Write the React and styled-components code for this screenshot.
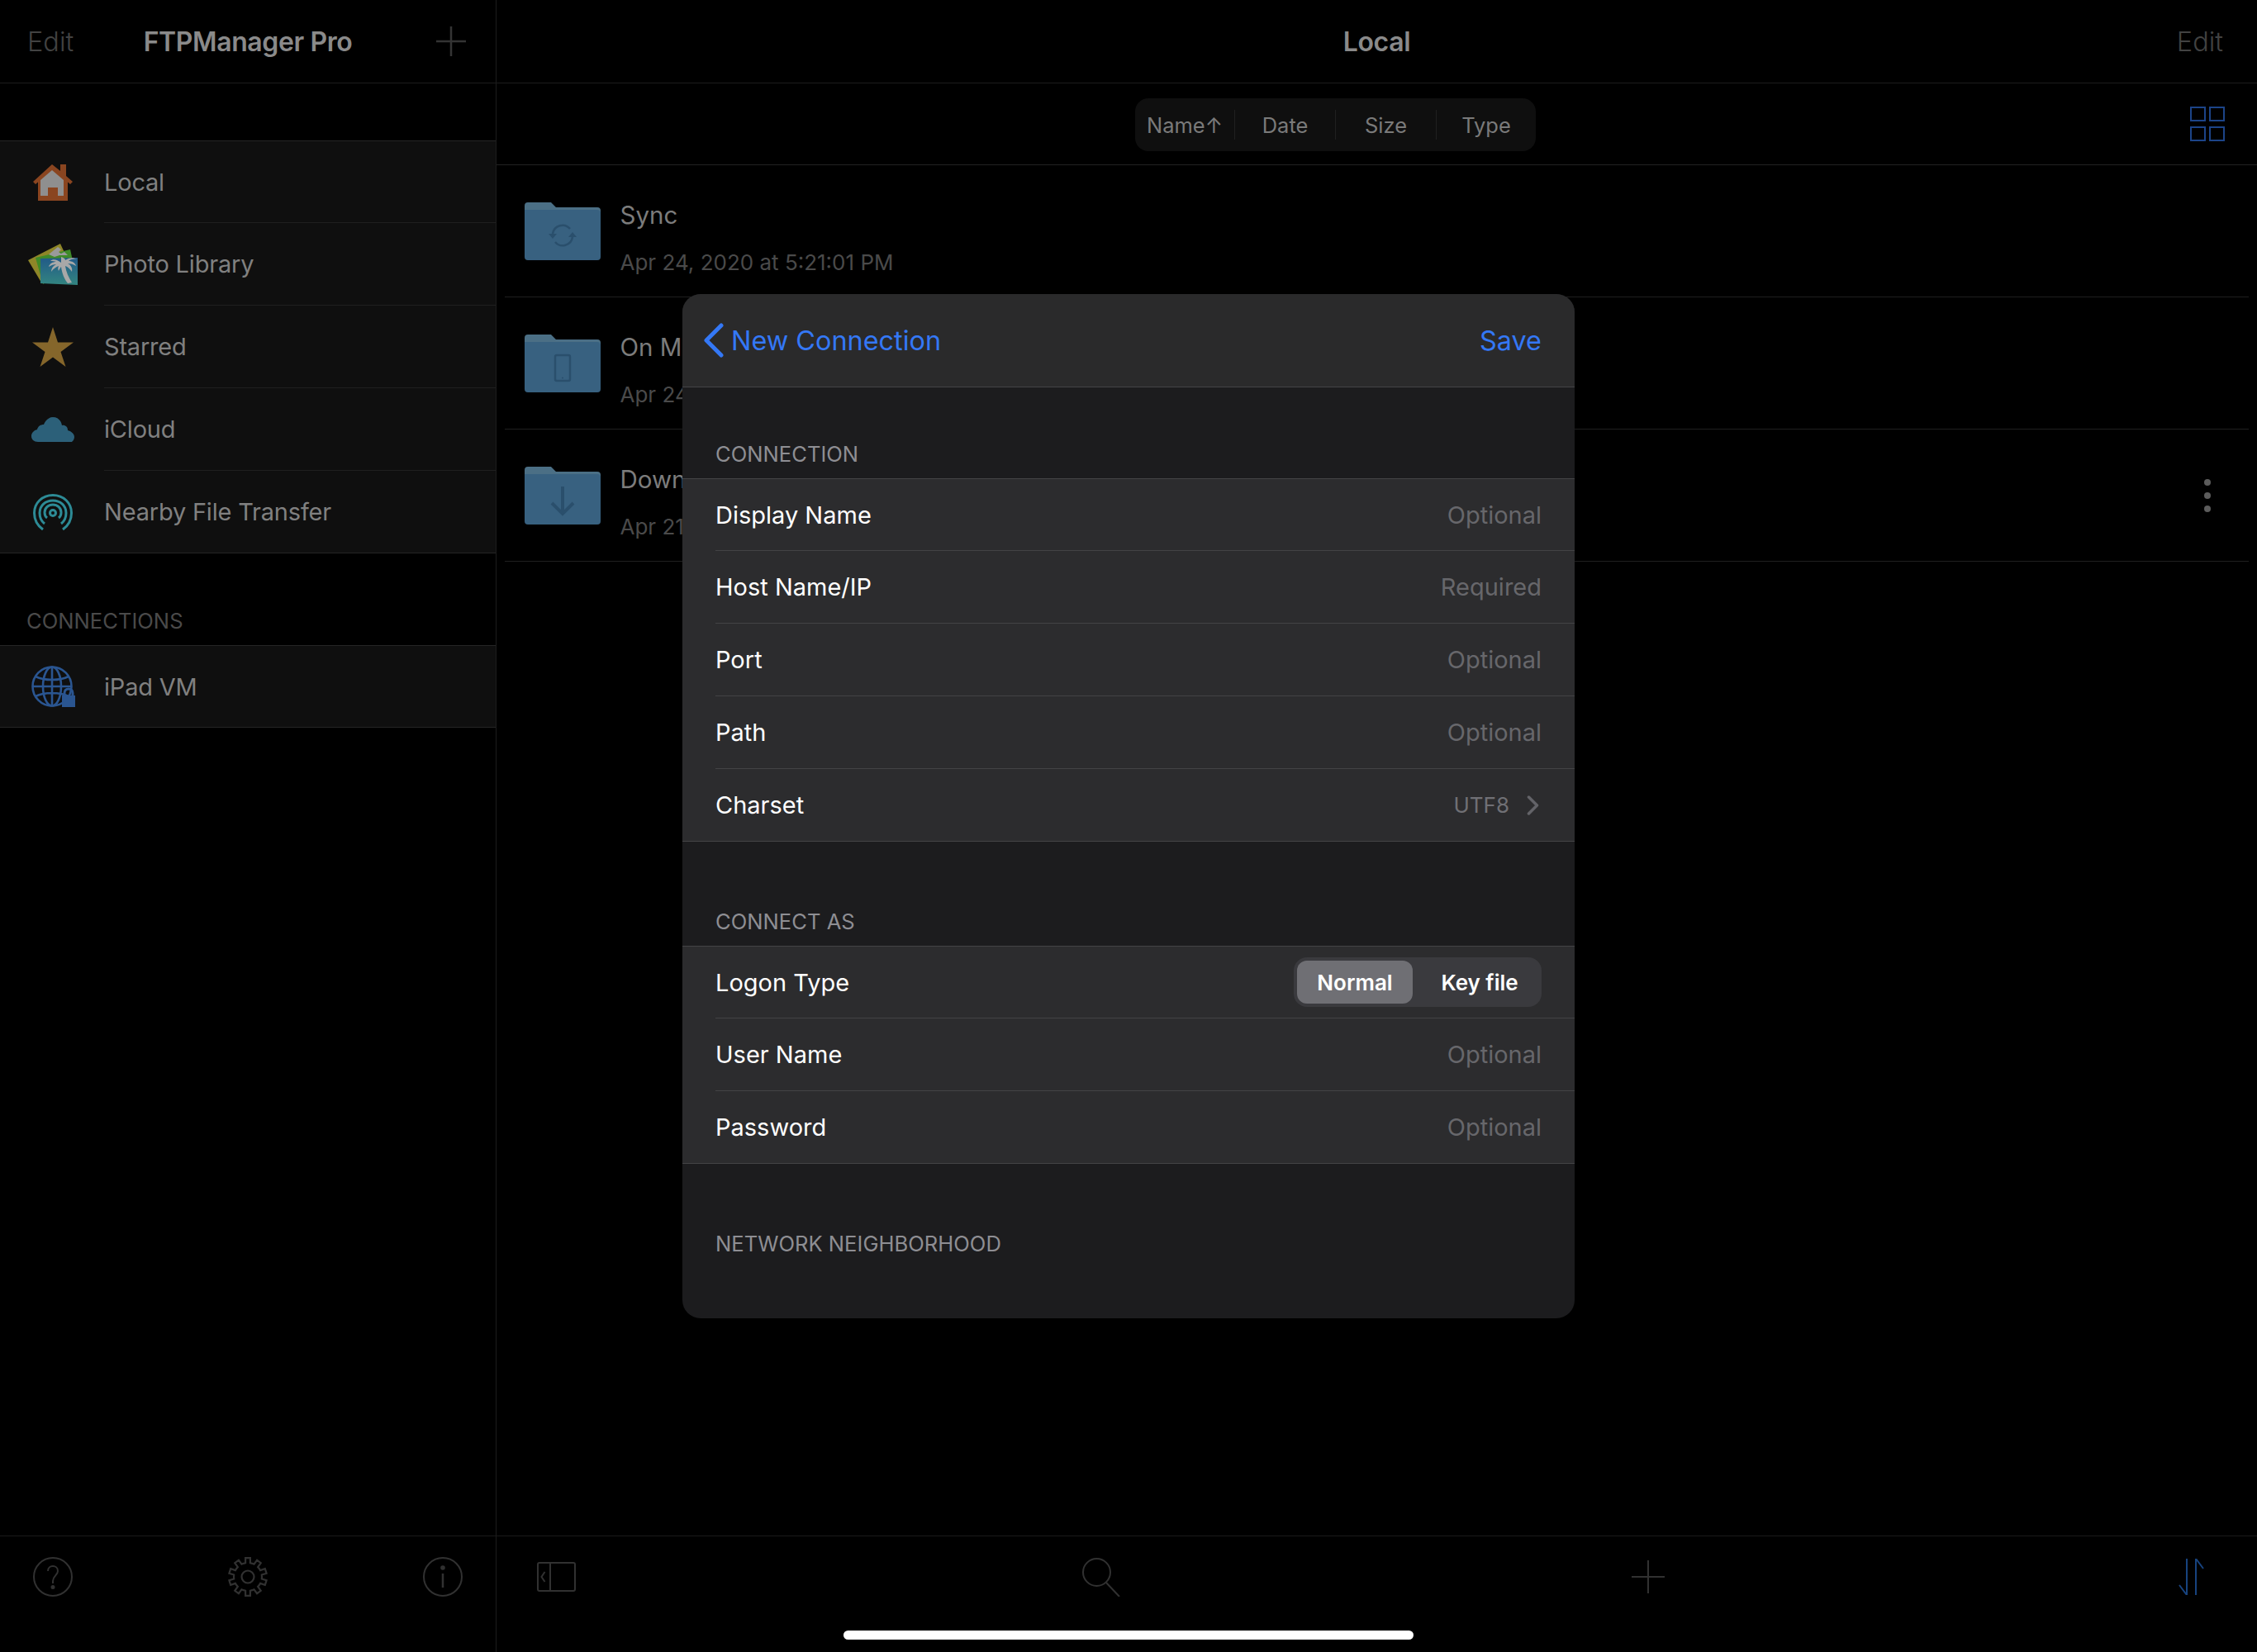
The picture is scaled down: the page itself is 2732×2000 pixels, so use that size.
import React from "react";
import styled, { createGlobalStyle } from "styled-components";

const Global = createGlobalStyle`
  html, body { margin: 0; padding: 0; background: #000; }
  * { box-sizing: border-box; }
  body { font-family: Inter, "Liberation Sans", sans-serif; -webkit-font-smoothing: antialiased; }
`;

const Screen = styled.div`
  position: relative;
  width: 2732px;
  height: 2000px;
  background: #000;
  display: flex;
  overflow: hidden;
`;

const Sidebar = styled.aside`
  width: 601px;
  flex: none;
  border-right: 1px solid #1c1c1c;
  display: flex;
  flex-direction: column;
`;

const Main = styled.main`
  flex: 1;
  min-width: 0;
  display: flex;
  flex-direction: column;
`;

const NavBar = styled.header`
  height: 101px;
  flex: none;
  border-bottom: 1px solid #1c1c1c;
  display: grid;
  grid-template-columns: 1fr auto 1fr;
  align-items: center;
  padding: ${(p) => p.$padding};
`;

const NavEdit = styled.span`
  font-size: 32.5px;
  font-weight: 300;
  color: #424242;
  justify-self: ${(p) => p.$align || "start"};
`;

const NavTitle = styled.h1`
  margin: 0;
  font-size: 32px;
  font-weight: 600;
  color: #8a8a8a;
  letter-spacing: -0.4px;
`;

const NavPlus = styled.svg`
  justify-self: end;
  margin-right: 3px;
  display: block;
`;

const Group = styled.div`
  margin-top: ${(p) => p.$top || 0}px;
  background: #0f0f0f;
  border-top: 1px solid #252525;
  border-bottom: 1px solid #252525;
`;

const SideRow = styled.div`
  height: 100px;
  display: flex;
  align-items: stretch;
  &:first-child { height: 99px; }
  &:last-child { height: 99px; }
  &:only-child { height: 98px; }
  &:last-child > div:last-child { border-bottom: none; }
`;

const SideIcon = styled.div`
  width: 126px;
  flex: none;
  display: flex;
  align-items: center;
  justify-content: center;
  padding-left: ${(p) => p.$nudge || 0}px;
`;

const SideLabel = styled.div`
  flex: 1;
  display: flex;
  align-items: center;
  font-size: 29px;
  letter-spacing: -0.2px;
  color: #808080;
  border-bottom: 1px solid #1f1f1f;
`;

const SectionLabel = styled.div`
  height: 111px;
  padding: 67px 0 0 32px;
  font-size: 25.6px;
  line-height: 30px;
  color: #4a4a4a;
`;

const BottomBar = styled.footer`
  margin-top: auto;
  height: 141px;
  flex: none;
  border-top: 1px solid #1a1a1a;
  padding-top: 24px;
`;

const SideTools = styled(BottomBar)`
  display: flex;
  justify-content: space-between;
  padding-left: 34px;
  padding-right: 34px;
`;

const MainTools = styled(BottomBar)`
  display: grid;
  grid-template-columns: 660px 662px 657px 60px;
  padding-left: 42px;
`;

const ToolSlot = styled.div`
  width: 60px;
  height: 50px;
  display: flex;
  align-items: center;
  justify-content: center;
`;

const SortBand = styled.div`
  height: 99px;
  flex: none;
  border-bottom: 1px solid #222;
  display: flex;
  align-items: flex-start;
  padding: 18px 39px 0 773px;
`;

const Sort = styled.div`
  width: 485px;
  height: 64px;
  border-radius: 16px;
  background: #0f0f0f;
  display: flex;
  align-items: center;
`;

const SortCell = styled.div`
  width: ${(p) => p.$w}px;
  height: 36px;
  display: flex;
  align-items: center;
  justify-content: center;
  font-size: 25.5px;
  color: #7a7a7a;
  border-right: ${(p) => (p.$last ? "none" : "1px solid #202020")};
`;

const GridIcon = styled.svg`
  margin-left: auto;
  margin-top: 10px;
  display: block;
`;

const FileRow = styled.div`
  height: 160px;
  margin: 0 10px;
  padding-left: 24px;
  border-bottom: 1px solid #1f1f1f;
  display: flex;
  align-items: center;
  gap: 23.5px;
`;

const FileText = styled.div`
  padding-top: 16px;
  display: flex;
  flex-direction: column;
  gap: 25px;
`;

const FileName = styled.div`
  font-size: 29.5px;
  line-height: 36px;
  color: #7c7c7c;
`;

const FileDate = styled.div`
  font-size: 26px;
  line-height: 30px;
  color: #4a4a4a;
`;

const Kebab = styled.div`
  margin-left: auto;
  margin-right: 46px;
  display: flex;
  flex-direction: column;
  gap: 8px;
`;

const Dot = styled.span`
  width: 8px;
  height: 8px;
  border-radius: 50%;
  background: #5c5c5c;
`;

const Modal = styled.section`
  position: absolute;
  left: 826px;
  top: 356px;
  width: 1080px;
  height: 1240px;
  border-radius: 22px;
  overflow: hidden;
  background: #1c1c1e;
`;

const ModalHead = styled.div`
  height: 113px;
  background: #2a2a2b;
  border-bottom: 1px solid #444446;
  display: flex;
  align-items: center;
  padding: 0 40px 0 26px;
  color: #3478f6;
  font-size: 32.4px;
`;

const Back = styled.div`
  display: flex;
  align-items: center;
  gap: 9px;
`;

const Save = styled.div`
  margin-left: auto;
`;

const FormLabel = styled.div`
  padding: ${(p) => p.$top}px 0 0 40px;
  height: ${(p) => p.$h}px;
  font-size: 25.6px;
  line-height: 30px;
  color: #8e8e93;
`;

const FormGroup = styled.div`
  background: #2c2c2e;
  border-top: 1px solid #444446;
  border-bottom: 1px solid #444446;
`;

const FormRow = styled.div`
  height: 88px;
  padding-left: 40px;
  &:first-child { height: 87px; }
  &:last-child { height: 87px; }
  &:last-child > div { border-bottom: none; }
`;

const FormInner = styled.div`
  height: 100%;
  display: flex;
  align-items: center;
  justify-content: space-between;
  padding-right: 40px;
  border-bottom: 1px solid #434345;
  font-size: 29px;
  color: #fff;
`;

const Hint = styled.span`
  color: #67676b;
`;

const Value = styled.span`
  display: flex;
  align-items: center;
  gap: 21px;
  margin-right: 3px;
  font-size: 26px;
  color: #707075;
`;

const Segments = styled.div`
  width: 300px;
  height: 60px;
  padding: 4px;
  border-radius: 16px;
  background: #3a3a3e;
  display: flex;
`;

const Segment = styled.div`
  width: ${(p) => p.$w}px;
  height: 52px;
  border-radius: 12px;
  background: ${(p) => (p.$on ? "#6f6f74" : "transparent")};
  padding-left: ${(p) => p.$shift || 0}px;
  display: flex;
  align-items: center;
  justify-content: center;
  font-size: 26px;
  font-weight: 600;
  color: #fff;
`;

const HomeBar = styled.div`
  position: absolute;
  left: 1021px;
  top: 1974px;
  width: 690px;
  height: 11px;
  border-radius: 6px;
  background: #fff;
`;

const House = () => (
  <svg width="48" height="44" viewBox="0 0 48 44">
    <path d="M23 0 33 8V0h7v14l8 7-3 3-3-2.600V44H6V21.400L3 24 0 21z" fill="#8a4520" />
    <path d="M23 7 37 19v19H9V19z" fill="#8f8f8f" />
    <path d="M18 28h12v14H18z" fill="#8a4520" />
  </svg>
);

const Photos = () => (
  <svg width="60" height="50" viewBox="0 0 60 50">
    <defs>
      <linearGradient id="pg" x1="0" y1="0" x2="0" y2="1">
        <stop offset="0" stopColor="#215a88" />
        <stop offset="1" stopColor="#338580" />
      </linearGradient>
    </defs>
    <path d="M0 20 39 0l7 15-30 32z" fill="#8e8628" />
    <path d="M9 17 51 7l4 18-37 24z" fill="#3f8a28" />
    <path d="M25 13 36 4l4 3-3 3 4 3-9 3z" fill="#9a9a9a" />
    <path d="M36 14l8-4 4 4z" fill="#9a9a9a" />
    <path d="M15 18 60 17v33L15 48z" fill="url(#pg)" />
    <path d="M40 23c-5-4-10-5-13-2 3 0 5 0 7 1-4 0-8 2-9 6 3-2 6-3 9-3-4 2-6 5-6 9 3-4 6-6 9-7-1 2-1 4 0 6 1-2 2-4 3-5 1 8 4 15 8 20l5-1c-4-6-7-13-8-20 3 1 6 4 8 7 1-4-1-8-5-10 4 0 7 1 10 3-1-4-5-6-9-6 2-2 6-3 10-2-4-3-10-2-14 1 0-2-2-3-5-4z" fill="#a8a8a8" />
  </svg>
);

const Star = () => (
  <svg width="50" height="48" viewBox="0 0 50 48">
    <path d="M25 0 31 18.500H50L34.500 30 40.500 48 25 36.500 9.500 48 15.500 30 0 18.500H19z" fill="#85662b" />
  </svg>
);

const Cloud = () => (
  <svg width="52" height="30" viewBox="0 0 52 30">
    <path d="M8 30C3 30 0 27 0 23c0-4 3-7 7-8 1-4 4-6 8-6 2-5 6-9 11-9 6 0 10 4 11 10 1-.5 2-.5 3 0 3 1 4 3 4 6 4 1 8 4 8 8 0 4-3 7-7 7z" fill="#2c6079" />
  </svg>
);

const Nearby = () => (
  <svg width="48" height="44" viewBox="0 0 48 44" fill="none" stroke="#2d8b96" strokeWidth="3">
    <path d="M12 43C5 38 1.500 31 1.500 23 1.500 11 11 1.500 24 1.500S46.500 11 46.500 23c0 8-3.500 15-10.500 20" />
    <path d="M14 36C10 33 8 28 8 23 8 14 15 8 24 8s16 6 16 15c0 5-2 10-6 13" />
    <path d="M17 29c-2-1.500-3-4-3-6.500C14 17 18.500 13 24 13s10 4 10 9.500c0 2.500-1 5-3 6.500" />
    <circle cx="24" cy="23" r="3.500" />
  </svg>
);

const Globe = () => (
  <svg width="53" height="50" viewBox="0 0 53 50" fill="none" stroke="#2a5590" strokeWidth="2.600">
    <ellipse cx="25" cy="25" rx="23.500" ry="23.500" />
    <ellipse cx="25" cy="25" rx="11" ry="23.500" />
    <path d="M25 1.500v47M1.500 25h47M5 13c6 3 13 4 20 4s14-1 20-4M5 37c6-3 13-4 20-4s14 1 20 4" />
    <rect x="37" y="36" width="16" height="14" fill="#2a5590" stroke="none" />
    <path d="M40 37v-4c0-3 2-5 5-5s5 2 5 5v4" strokeWidth="3" />
  </svg>
);

const Folder = ({ children }) => (
  <svg width="92" height="70" viewBox="0 0 92 70" style={{ flex: "none" }}>
    <path d="M0 4a4 4 0 0 1 4-4h28l6 6h50a4 4 0 0 1 4 4v8H0z" fill="#4b6f85" />
    <path d="M0 9h88a4 4 0 0 1 4 4v53a4 4 0 0 1-4 4H4a4 4 0 0 1-4-4z" fill="#386180" />
    {children}
  </svg>
);

const gearPath = () => {
  const teeth = 10;
  const cx = 24;
  const cy = 24;
  const pts = [];
  for (let i = 0; i < teeth; i++) {
    const a = (i * 2 * Math.PI) / teeth - Math.PI / 2;
    const step = (2 * Math.PI) / teeth;
    [
      [-0.5, 17],
      [-0.27, 17],
      [-0.2, 23],
      [0.2, 23],
      [0.27, 17],
      [0.5, 17],
    ].forEach(([o, r]) => {
      const t = a + o * step;
      pts.push(`${(cx + r * Math.cos(t)).toFixed(2)},${(cy + r * Math.sin(t)).toFixed(2)}`);
    });
  }
  return pts.join(" ");
};

const toolStroke = "#313131";

const items = [
  ["Local", <House />],
  ["Photo Library", <Photos />],
  ["Starred", <Star />],
  ["iCloud", <Cloud />],
  ["Nearby File Transfer", <Nearby />],
];

const SideItem = ({ icon, label, nudge }) => (
  <SideRow>
    <SideIcon $nudge={nudge}>{icon}</SideIcon>
    <SideLabel>{label}</SideLabel>
  </SideRow>
);

const Field = ({ label, hint }) => (
  <FormRow>
    <FormInner>
      <span>{label}</span>
      <Hint>{hint}</Hint>
    </FormInner>
  </FormRow>
);

export default function App() {
  return (
    <Screen>
      <Global />
      <Sidebar>
        <NavBar $padding="0 33px">
          <NavEdit>Edit</NavEdit>
          <NavTitle>FTPManager Pro</NavTitle>
          <NavPlus width="36" height="36" viewBox="0 0 36 36" stroke="#343434" strokeWidth="2.500">
            <path d="M18 0v36M0 18h36" />
          </NavPlus>
        </NavBar>
        <Group $top={69}>
          {items.map(([label, icon]) => (
            <SideItem key={label} label={label} icon={icon} nudge={1} />
          ))}
        </Group>
        <SectionLabel>CONNECTIONS</SectionLabel>
        <Group>
          <SideItem label="iPad VM" icon={<Globe />} nudge={2} />
        </Group>
        <SideTools>
          <ToolSlot>
            <svg width="48" height="48" viewBox="0 0 48 48" fill="none" stroke={toolStroke} strokeWidth="2">
              <circle cx="24" cy="24" r="23" />
              <path d="M18 17c0-4 3-6 6-6s6 2 6 6c0 5-6 6-6 12v3" />
              <circle cx="24" cy="36.500" r="1.500" fill={toolStroke} />
            </svg>
          </ToolSlot>
          <ToolSlot>
            <svg width="48" height="48" viewBox="0 0 48 48" fill="none" stroke={toolStroke} strokeWidth="2.200">
              <polygon points={gearPath()} />
              <circle cx="24" cy="24" r="7.500" />
            </svg>
          </ToolSlot>
          <ToolSlot>
            <svg width="48" height="48" viewBox="0 0 48 48" fill="none" stroke={toolStroke} strokeWidth="2">
              <circle cx="24" cy="24" r="23" />
              <path d="M24 20v17" strokeWidth="2.500" />
              <circle cx="24" cy="13" r="1.800" fill={toolStroke} />
            </svg>
          </ToolSlot>
        </SideTools>
      </Sidebar>

      <Main>
        <NavBar $padding="0 41px">
          <span />
          <NavTitle>Local</NavTitle>
          <NavEdit $align="end">Edit</NavEdit>
        </NavBar>
        <SortBand>
          <Sort>
            <SortCell $w={121}>Name↑</SortCell>
            <SortCell $w={122}>Date</SortCell>
            <SortCell $w={122}>Size</SortCell>
            <SortCell $w={120} $last>Type</SortCell>
          </Sort>
          <GridIcon width="42" height="42" viewBox="0 0 42 42" fill="none" stroke="#1c4488" strokeWidth="2">
            <rect x="1" y="1" width="17" height="16" />
            <rect x="24" y="1" width="17" height="16" />
            <rect x="1" y="25" width="17" height="16" />
            <rect x="24" y="25" width="17" height="16" />
          </GridIcon>
        </SortBand>
        <FileRow>
          <Folder>
            <g fill="none" stroke="#2a4f6c" strokeWidth="2.500">
              <path d="M34 38a12 12 0 0 1 21-6" />
              <path d="M58 42a12 12 0 0 1-21 6" />
            </g>
            <path d="M29 38h10l-5 6zM63 42H53l5-6z" fill="#2a4f6c" transform="rotate(180 46 40)" />
          </Folder>
          <FileText>
            <FileName>Sync</FileName>
            <FileDate>Apr 24, 2020 at 5:21:01 PM</FileDate>
          </FileText>
        </FileRow>
        <FileRow>
          <Folder>
            <rect x="37" y="25" width="18" height="31" rx="2" fill="none" stroke="#2a4f6c" strokeWidth="2.500" />
            <circle cx="46" cy="52.500" r="1" fill="#2a4f6c" />
          </Folder>
          <FileText>
            <FileName>On My iPad</FileName>
            <FileDate>Apr 24, 2020 at 5:21:01 PM</FileDate>
          </FileText>
        </FileRow>
        <FileRow>
          <Folder>
            <path d="M46 24v33M33 44l13 13 13-13" fill="none" stroke="#2a4f6c" strokeWidth="4" />
          </Folder>
          <FileText>
            <FileName>Downloads</FileName>
            <FileDate>Apr 21, 2020 at 5:21:01 PM</FileDate>
          </FileText>
          <Kebab>
            <Dot />
            <Dot />
            <Dot />
          </Kebab>
        </FileRow>
        <MainTools>
          <ToolSlot>
            <svg width="47" height="36" viewBox="0 0 47 36" fill="none" stroke={toolStroke} strokeWidth="2">
              <rect x="1" y="1" width="45" height="34" rx="2" />
              <path d="M16 1v34" />
              <path d="M9.500 12 5.500 18l4 6" />
            </svg>
          </ToolSlot>
          <ToolSlot>
            <svg width="46" height="47" viewBox="0 0 46 47" fill="none" stroke={toolStroke} strokeWidth="2">
              <circle cx="17.500" cy="17.500" r="16.500" />
              <path d="M29 30l16 17" />
            </svg>
          </ToolSlot>
          <ToolSlot>
            <svg width="40" height="40" viewBox="0 0 40 40" stroke={toolStroke} strokeWidth="2">
              <path d="M20 0v40M0 20h40" />
            </svg>
          </ToolSlot>
          <ToolSlot>
            <svg width="31" height="44" viewBox="0 0 31 44" fill="none" stroke="#17437f" strokeWidth="2">
              <path d="M10 0v44L1 32" />
              <path d="M21 44V0l9 12" />
            </svg>
          </ToolSlot>
        </MainTools>
      </Main>

      <Modal>
        <ModalHead>
          <Back>
            <svg width="24" height="42" viewBox="0 0 24 42" fill="none" stroke="#3478f6" strokeWidth="5" strokeLinecap="round" strokeLinejoin="round">
              <path d="M21 3 3 21l18 18" />
            </svg>
            New Connection
          </Back>
          <Save>Save</Save>
        </ModalHead>
        <FormLabel $top={66} $h={110}>CONNECTION</FormLabel>
        <FormGroup>
          <Field label="Display Name" hint="Optional" />
          <Field label="Host Name/IP" hint="Required" />
          <Field label="Port" hint="Optional" />
          <Field label="Path" hint="Optional" />
          <FormRow>
            <FormInner>
              <span>Charset</span>
              <Value>
                UTF8
                <svg width="15" height="24" viewBox="0 0 15 24" fill="none" stroke="#636368" strokeWidth="3.500" strokeLinecap="round" strokeLinejoin="round">
                  <path d="M2.500 2 12.500 12l-10 10" />
                </svg>
              </Value>
            </FormInner>
          </FormRow>
        </FormGroup>
        <FormLabel $top={82} $h={126}>CONNECT AS</FormLabel>
        <FormGroup>
          <FormRow>
            <FormInner>
              <span>Logon Type</span>
              <Segments>
                <Segment $w={140} $on>Normal</Segment>
                <Segment $w={152} $shift={10}>Key file</Segment>
              </Segments>
            </FormInner>
          </FormRow>
          <Field label="User Name" hint="Optional" />
          <Field label="Password" hint="Optional" />
        </FormGroup>
        <FormLabel $top={82} $h={126}>NETWORK NEIGHBORHOOD</FormLabel>
      </Modal>
      <HomeBar />
    </Screen>
  );
}
